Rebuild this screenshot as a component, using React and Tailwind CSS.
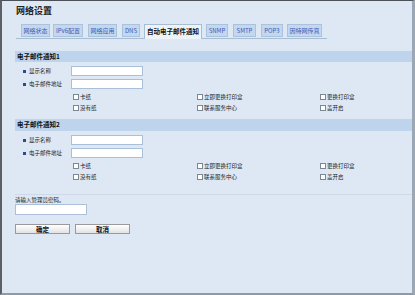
import React from 'react';

const tabs = [
  { label: '网络状态', cls: 'w-[29px] ml-0' },
  { label: 'IPv6配置', cls: 'w-[30px] ml-[3px]' },
  { label: '网络应用', cls: 'w-[29px] ml-[5px]' },
  { label: 'DNS', cls: 'w-[18px] ml-[5px]' },
  { label: '自动电子邮件通知', cls: 'w-[58px] ml-[4px]', active: true },
  { label: 'SNMP', cls: 'w-[22px] ml-[4px]' },
  { label: 'SMTP', cls: 'w-[23px] ml-[5px]' },
  { label: 'POP3', cls: 'w-[22px] ml-[5px]' },
  { label: '因特网传真', cls: 'w-[35px] ml-[4px]' },
];

const checks = [
  ['卡纸', '立即更换打印盒', '更换打印盒'],
  ['没有纸', '联系服务中心', '盖开启'],
];

function Field({ label, className }) {
  return (
    <div className={'flex items-center h-[10px] ' + className}>
      <span className="ml-[21px] w-[3px] h-[3px] bg-[#2b4c8c]" />
      <span className="ml-[3px] w-[42px] text-[5.5px] leading-[10px] text-[#222]">{label}</span>
      <span className="w-[72px] h-[10px] bg-white border border-[#a9c0d8]" />
    </div>
  );
}

function Box({ label, className }) {
  return (
    <div className={'flex items-center ' + className}>
      <span className="w-[6px] h-[6px] bg-white border border-[#7a8794]" />
      <span className="ml-[1px] text-[5.5px] leading-[6px] text-[#222]">{label}</span>
    </div>
  );
}

function Notice({ title, className, headH }) {
  return (
    <div className={className}>
      <div className={'ml-[13px] bg-[#bdd4ec] pl-[2px] flex items-center text-[6.5px] font-bold text-[#111] ' + headH}>
        {title}
      </div>
      <Field label="显示名称" className="mt-[4px]" />
      <Field label="电子邮件地址" className="mt-[3px]" />
      {checks.map((row, i) => (
        <div key={i} className="flex ml-[71px] h-[6px] mt-[5px]">
          <Box label={row[0]} className="w-[124px]" />
          <Box label={row[1]} className="w-[123px]" />
          <Box label={row[2]} className="w-[80px]" />
        </div>
      ))}
    </div>
  );
}

export default function App() {
  return (
    <div className="w-[415px] h-[295px] overflow-hidden bg-[#dde8f4] border-t border-t-[#4b5058] border-l-2 border-l-[#5b6068] border-r-[3px] border-r-[#9ba7b5] border-b-2 border-b-[#8f9aa9] font-['Noto_Sans_CJK_SC','Noto_Sans',sans-serif]">
      <div className="ml-[14px] pt-[5px] text-[9px] leading-[10px] font-bold text-[#222]">网络设置</div>

      <div className="ml-[14px] mt-[8px] w-[311px] pl-[5px] flex items-end border-b border-[#a7bdd4] h-[15px]">
        {tabs.map((t) =>
          t.active ? (
            <div
              key={t.label}
              className={'h-[15px] -mb-px bg-[#eef3f9] border border-b-0 border-[#a7bdd4] flex items-center justify-center text-[6.5px] font-bold text-[#111] ' + t.cls}
            >
              {t.label}
            </div>
          ) : (
            <div
              key={t.label}
              className={'h-[13px] mb-[1px] bg-[#c3d7ee] border border-[#aac2dc] flex items-center justify-center text-[6px] text-[#3a5cb8] ' + t.cls}
            >
              {t.label}
            </div>
          )
        )}
      </div>

      <Notice title="电子邮件通知1" className="mt-[12px]" headH="h-[11px]" />
      <Notice title="电子邮件通知2" className="mt-[8px]" headH="h-[12px]" />

      <div className="ml-[13px] mt-[14px] border-t border-[#cdd9e6]" />
      <div className="ml-[13px] mt-[2px] text-[5.5px] leading-[6px] text-[#222]">请输入管理员密码。</div>
      <div className="ml-[13px] mt-[1px] w-[72px] h-[11px] bg-white border border-[#a9c0d8]" />

      <div className="ml-[13px] mt-[9px] flex gap-[5px]">
        <button className="w-[55px] h-[10px] bg-gradient-to-b from-white to-[#e2e2e2] border border-[#9a9a9a] text-[6.5px] leading-[8px] font-bold text-[#111]">
          确定
        </button>
        <button className="w-[55px] h-[10px] bg-gradient-to-b from-white to-[#e2e2e2] border border-[#9a9a9a] text-[6.5px] leading-[8px] font-bold text-[#111]">
          取消
        </button>
      </div>
    </div>
  );
}
